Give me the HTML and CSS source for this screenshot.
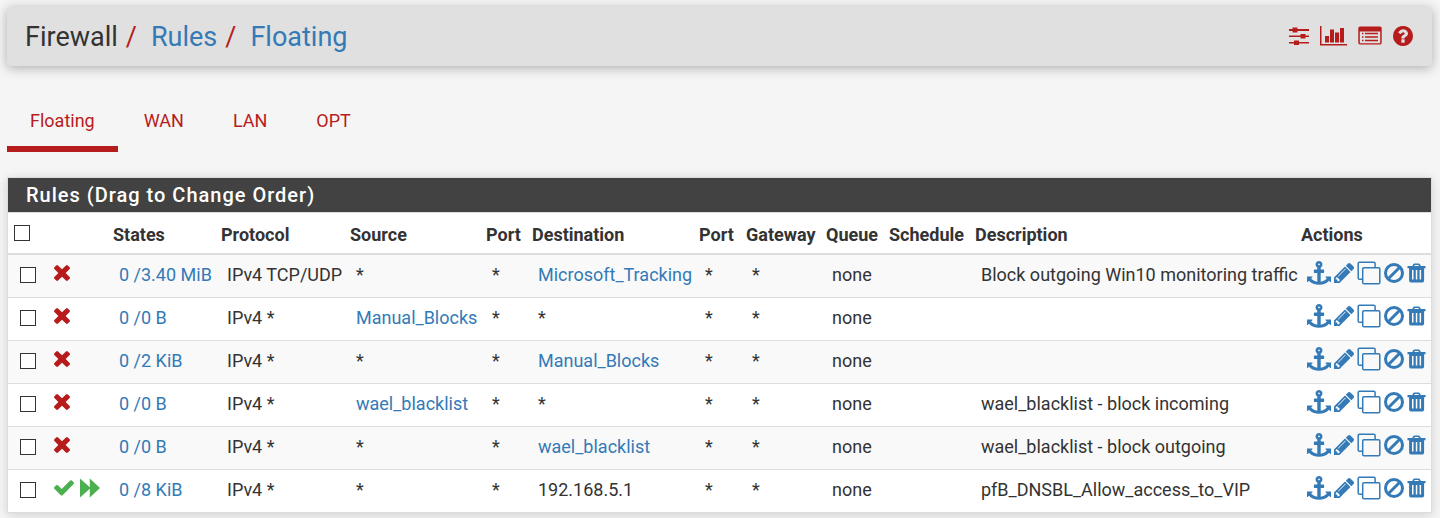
FILE: index.html
```
<!DOCTYPE html>
<html lang="en">
<head>
<meta charset="utf-8">
<title>Firewall / Rules / Floating</title>
<link rel="stylesheet" href="styles.css">
</head>
<body>
<svg class="sprite" aria-hidden="true">
  <symbol id="anchor" viewBox="0 0 1792 1792"><path d="M960 256q0-26-19-45t-45-19-45 19-19 45 19 45 45 19 45-19 19-45zm832 928v352q0 22-20 30-8 2-12 2-12 0-23-9l-93-93q-119 143-318.500 226.500t-429.500 83.500-429.500-83.500-318.500-226.500l-93 93q-9 9-23 9-4 0-12-2-20-8-20-30v-352q0-14 9-23t23-9h352q22 0 30 20 8 19-7 35l-100 100q67 91 189.500 153.500t271.500 82.500v-647h-192q-26 0-45-19t-19-45v-128q0-26 19-45t45-19h192v-163q-58-34-93-92.500t-35-128.500q0-106 75-181t181-75 181 75 75 181q0 70-35 128.500t-93 92.500v163h192q26 0 45 19t19 45v128q0 26-19 45t-45 19h-192v647q149-20 271.500-82.500t189.500-153.500l-100-100q-15-16-7-35 8-20 30-20h352q14 0 23 9t9 23z"/></symbol>
  <symbol id="pencil" viewBox="128 149 1515 1515"><path d="M491 1536l91-91-235-235-91 91v107h128v128h107zm523-928q0-22-22-22-10 0-17 7l-542 542q-7 7-7 17 0 22 22 22 10 0 17-7l542-542q7-7 7-17zm-54-192l416 416-832 832h-416v-416zm683 96q0 53-37 90l-166 166-416-416 166-165q36-38 90-38 53 0 91 38l235 234q37 39 37 91z"/></symbol>
  <symbol id="clone" viewBox="0 0 24 24"><path fill="none" stroke="currentColor" stroke-width="1.500" d="M7 6.700h14.500a1.300 1.300 0 0 1 1.300 1.300v13.500a1.300 1.300 0 0 1-1.300 1.300H7a1.300 1.300 0 0 1-1.300-1.300V8A1.300 1.300 0 0 1 7 6.700zM5.500 18.200H2.500a1.300 1.300 0 0 1-1.300-1.300V2.500a1.300 1.300 0 0 1 1.300-1.300h14.300a1.300 1.300 0 0 1 1.300 1.300v4"/></symbol>
  <symbol id="ban" viewBox="0 0 20 20"><g fill="none" stroke="currentColor" stroke-width="3"><circle cx="10" cy="10" r="8.500"/><path d="M4 16L16 4"/></g></symbol>
  <symbol id="trash" viewBox="0 0 19 20"><path fill-rule="evenodd" d="M.5 3h4.800L6.300 1Q6.600.5 7.500.5h4.200q.9 0 1.200.7L13.900 3H18.500V5.200h-1.400V17.500q0 2-1.700 2H3.800q-1.700 0-1.700-2V5.200H.5zM7.200 3h4.800l-.6-1H7.800zM5 7v9.500h1.500V7zm3.800 0v9.500h1.500V7zm3.800 0v9.500h1.500V7z"/></symbol>
  <symbol id="times" viewBox="302 366 1188 1188"><path d="M1490 1322q0 40-28 68l-136 136q-28 28-68 28t-68-28l-294-294-294 294q-28 28-68 28t-68-28l-136-136q-28-28-28-68t28-68l294-294-294-294q-28-28-28-68t28-68l136-136q28-28 68-28t68 28l294 294 294-294q28-28 68-28t68 28l136 136q28 28 28 68t-28 68l-294 294 294 294q28 28 28 68z"/></symbol>
  <symbol id="check" viewBox="121 344 1550 1188"><path d="M1671 566q0 40-28 68l-724 724-136 136q-28 28-68 28t-68-28l-136-136-362-362q-28-28-28-68t28-68l136-136q28-28 68-28t68 28l294 295 656-657q28-28 68-28t68 28l136 136q28 28 28 68z"/></symbol>
  <symbol id="forward" viewBox="0 0 21 20"><path d="M.5.500L10.300 9.200V.500L20.500 10 10.300 19.500V10.800L.5 19.500z"/></symbol>
  <symbol id="sliders" viewBox="0 0 20 20"><path d="M0 3h3.500V1.500h5V3H20v2H8.500v1.500h-5V5H0zM0 9.500h11.500V8h5v1.500H20v1.500h-3.500v1.500h-5V11H0zM0 16h5v-1.500h5V16h10v1.500H10V19H5v-1.500H0z"/></symbol>
  <symbol id="chart" viewBox="0 0 27 20"><path d="M0 0h1.500v18H27v1.500H0zM5 10h4v6.500H5zM10 3.500h4v13h-4zM15 6.500h4v10h-4zM20 2h4v14.500h-4z"/></symbol>
  <symbol id="list" viewBox="0 0 24 20"><path fill-rule="evenodd" d="M2 .5h20q1.700 0 1.700 1.700v14.600q0 1.700-1.700 1.700H2Q.3 18.500.3 16.800V2.200Q.3.500 2 .5zM1.800 5.500v11.200q0 .5.500.5h19.400q.5 0 .5-.5V5.500zM4 6.700h1.500v1.500H4zm3 0h13v1.500H7zM4 10.200h1.500v1.500H4zm3 0h13v1.500H7zM4 13.700h1.500v1.500H4zm3 0h13v1.500H7z"/></symbol>
  <symbol id="help" viewBox="128 128 1536 1536"><path d="M1024 1376v-192q0-14-9-23t-23-9h-192q-14 0-23 9t-9 23v192q0 14 9 23t23 9h192q14 0 23-9t9-23zm256-672q0-88-55.500-163t-138.500-116-170-41q-243 0-371 213-15 24 8 42l132 100q7 6 19 6 16 0 25-12 53-68 86-92 34-24 86-24 48 0 85.500 26t37.500 59q0 38-20 61t-68 45q-63 28-115.500 86.500t-52.500 125.500v36q0 14 9 23t23 9h192q14 0 23-9t9-23q0-19 21.500-49.500t54.500-49.500q32-18 49-28.500t46-35 44.500-48 28-60.500 12.500-81zm384 192q0 209-103 385.500t-279.500 279.500-385.500 103-385.500-103-279.500-279.500-103-385.500 103-385.500 279.500-279.500 385.500-103 385.500 103 279.500 279.500 103 385.500z"/></symbol>
</svg>

<header class="page-header">
  <h1 class="crumbs"><span>Firewall</span><span class="slash">/</span><a href="#rules">Rules</a><span class="slash">/</span><a href="#floating">Floating</a></h1>
  <nav class="tools" aria-label="Page tools">
    <a href="#advanced" aria-label="Advanced settings"><svg class="w20"><use href="#sliders"/></svg></a>
    <a href="#status" aria-label="Status"><svg class="w27"><use href="#chart"/></svg></a>
    <a href="#log" aria-label="Log"><svg class="w24"><use href="#list"/></svg></a>
    <a href="#help-page" aria-label="Help"><svg class="w20"><use href="#help"/></svg></a>
  </nav>
</header>

<nav class="tabs" aria-label="Interfaces">
  <a class="tab active" href="#floating">Floating</a>
  <a class="tab" href="#wan">WAN</a>
  <a class="tab" href="#lan">LAN</a>
  <a class="tab" href="#opt">OPT</a>
</nav>

<section class="panel">
  <h2 class="panel-title">Rules (Drag to Change Order)</h2>
  <table class="rules">
    <colgroup><col class="c-check"><col class="c-icon"><col class="c-states"><col class="c-proto"><col class="c-source"><col class="c-port"><col class="c-dest"><col class="c-port2"><col class="c-gateway"><col class="c-queue"><col class="c-schedule"><col><col class="c-actions"></colgroup>
    <thead>
      <tr><th><input type="checkbox" aria-label="Select all"></th><th></th><th>States</th><th>Protocol</th><th>Source</th><th>Port</th><th>Destination</th><th>Port</th><th>Gateway</th><th>Queue</th><th>Schedule</th><th>Description</th><th>Actions</th></tr>
    </thead>
    <tbody>
      <tr><td><input type="checkbox" aria-label="Select rule 1"></td><td><div class="icons block"><svg class="times"><use href="#times"/></svg></div></td><td><a href="#s1">0 /3.40 MiB</a></td><td>IPv4 TCP/UDP</td><td>*</td><td>*</td><td><a href="#a1">Microsoft_Tracking</a></td><td>*</td><td>*</td><td>none</td><td></td><td>Block outgoing Win10 monitoring traffic</td><td><div class="icons"><a href="#m" aria-label="Move"><svg class="w24 h24"><use href="#anchor"/></svg></a><a href="#e" aria-label="Edit"><svg class="w20"><use href="#pencil"/></svg></a><a href="#c" aria-label="Copy"><svg class="w24 h24"><use href="#clone"/></svg></a><a href="#d" aria-label="Disable"><svg class="w20"><use href="#ban"/></svg></a><a href="#x" aria-label="Delete"><svg class="w19"><use href="#trash"/></svg></a></div></td></tr>
      <tr><td><input type="checkbox" aria-label="Select rule 2"></td><td><div class="icons block"><svg class="times"><use href="#times"/></svg></div></td><td><a href="#s2">0 /0 B</a></td><td>IPv4 *</td><td><a href="#a2">Manual_Blocks</a></td><td>*</td><td>*</td><td>*</td><td>*</td><td>none</td><td></td><td></td><td><div class="icons"><a href="#m" aria-label="Move"><svg class="w24 h24"><use href="#anchor"/></svg></a><a href="#e" aria-label="Edit"><svg class="w20"><use href="#pencil"/></svg></a><a href="#c" aria-label="Copy"><svg class="w24 h24"><use href="#clone"/></svg></a><a href="#d" aria-label="Disable"><svg class="w20"><use href="#ban"/></svg></a><a href="#x" aria-label="Delete"><svg class="w19"><use href="#trash"/></svg></a></div></td></tr>
      <tr><td><input type="checkbox" aria-label="Select rule 3"></td><td><div class="icons block"><svg class="times"><use href="#times"/></svg></div></td><td><a href="#s3">0 /2 KiB</a></td><td>IPv4 *</td><td>*</td><td>*</td><td><a href="#a3">Manual_Blocks</a></td><td>*</td><td>*</td><td>none</td><td></td><td></td><td><div class="icons"><a href="#m" aria-label="Move"><svg class="w24 h24"><use href="#anchor"/></svg></a><a href="#e" aria-label="Edit"><svg class="w20"><use href="#pencil"/></svg></a><a href="#c" aria-label="Copy"><svg class="w24 h24"><use href="#clone"/></svg></a><a href="#d" aria-label="Disable"><svg class="w20"><use href="#ban"/></svg></a><a href="#x" aria-label="Delete"><svg class="w19"><use href="#trash"/></svg></a></div></td></tr>
      <tr><td><input type="checkbox" aria-label="Select rule 4"></td><td><div class="icons block"><svg class="times"><use href="#times"/></svg></div></td><td><a href="#s4">0 /0 B</a></td><td>IPv4 *</td><td><a href="#a4">wael_blacklist</a></td><td>*</td><td>*</td><td>*</td><td>*</td><td>none</td><td></td><td>wael_blacklist - block incoming</td><td><div class="icons"><a href="#m" aria-label="Move"><svg class="w24 h24"><use href="#anchor"/></svg></a><a href="#e" aria-label="Edit"><svg class="w20"><use href="#pencil"/></svg></a><a href="#c" aria-label="Copy"><svg class="w24 h24"><use href="#clone"/></svg></a><a href="#d" aria-label="Disable"><svg class="w20"><use href="#ban"/></svg></a><a href="#x" aria-label="Delete"><svg class="w19"><use href="#trash"/></svg></a></div></td></tr>
      <tr><td><input type="checkbox" aria-label="Select rule 5"></td><td><div class="icons block"><svg class="times"><use href="#times"/></svg></div></td><td><a href="#s5">0 /0 B</a></td><td>IPv4 *</td><td>*</td><td>*</td><td><a href="#a5">wael_blacklist</a></td><td>*</td><td>*</td><td>none</td><td></td><td>wael_blacklist - block outgoing</td><td><div class="icons"><a href="#m" aria-label="Move"><svg class="w24 h24"><use href="#anchor"/></svg></a><a href="#e" aria-label="Edit"><svg class="w20"><use href="#pencil"/></svg></a><a href="#c" aria-label="Copy"><svg class="w24 h24"><use href="#clone"/></svg></a><a href="#d" aria-label="Disable"><svg class="w20"><use href="#ban"/></svg></a><a href="#x" aria-label="Delete"><svg class="w19"><use href="#trash"/></svg></a></div></td></tr>
      <tr><td><input type="checkbox" aria-label="Select rule 6"></td><td><div class="icons pass"><svg class="w20"><use href="#check"/></svg><svg class="w22"><use href="#forward"/></svg></div></td><td><a href="#s6">0 /8 KiB</a></td><td>IPv4 *</td><td>*</td><td>*</td><td>192.168.5.1</td><td>*</td><td>*</td><td>none</td><td></td><td>pfB_DNSBL_Allow_access_to_VIP</td><td><div class="icons"><a href="#m" aria-label="Move"><svg class="w24 h24"><use href="#anchor"/></svg></a><a href="#e" aria-label="Edit"><svg class="w20"><use href="#pencil"/></svg></a><a href="#c" aria-label="Copy"><svg class="w24 h24"><use href="#clone"/></svg></a><a href="#d" aria-label="Disable"><svg class="w20"><use href="#ban"/></svg></a><a href="#x" aria-label="Delete"><svg class="w19"><use href="#trash"/></svg></a></div></td></tr>
    </tbody>
  </table>
</section>
</body>
</html>
```
FILE: styles.css
```
* { box-sizing: border-box; }
body {
  margin: 0;
  padding: 7px 8px 5px 7px;
  background: #f5f5f5;
  color: #333;
  font: 18px/26px Roboto, "Liberation Sans", sans-serif;
}
a { color: #337ab7; text-decoration: none; }
svg { display: block; height: 20px; fill: currentColor; }
.sprite { display: none; }
.w19 { width: 19px; }
.w20 { width: 20px; }
.w22 { width: 22px; }
.w24 { width: 24px; }
.w27 { width: 27px; }
.h24 { height: 24px; }
.times { width: 16px; height: 16px; }

.page-header {
  display: flex;
  justify-content: space-between;
  align-items: center;
  min-height: 59px;
  padding: 0 19px 0 18px;
  background: #e0e0e0;
  border-radius: 4px;
  box-shadow: 0 2px 12px rgba(0, 0, 0, .3);
}
.crumbs { margin: 0; font-size: 27px; line-height: 32px; font-weight: 400; }
.slash { margin: 0 14px 0 8px; color: #b71c1c; }
.tools { display: flex; align-items: center; gap: 11px; padding-bottom: 2px; }
.tools a { color: #b71c1c; }

.tabs { display: flex; gap: 3px; margin-top: 31px; }
.tab {
  padding: 11px 23px 12px;
  border-bottom: 6px solid transparent;
  color: #b71c1c;
}
.tab.active { border-color: #b71c1c; }

.panel {
  margin-top: 25px;
  background: #fff;
  border: 1px solid #ddd;
  box-shadow: 0 2px 10px rgba(0, 0, 0, .15);
}
.panel-title {
  margin: 0;
  padding: 4px 18px;
  border-bottom: 1px solid #ddd;
  background: #424242;
  color: #fff;
  font-size: 20px;
  line-height: 26px;
  font-weight: 500;
  letter-spacing: 1px;
}
.rules { width: 100%; table-layout: fixed; border-collapse: separate; border-spacing: 0; }
.rules th { padding: 9px 0 5px 6px; border-bottom: 2px solid #ddd; text-align: left; font-weight: 700; white-space: nowrap; }
.rules td { height: 43px; padding: 7px 0 9px 12px; border-bottom: 1px solid #ddd; white-space: nowrap; }
.rules tbody tr:last-child td { height: 42px; border-bottom: 0; }
.rules tbody tr:nth-child(odd) { background: #f9f9f9; }
.rules input {
  appearance: none;
  display: block;
  width: 16px;
  height: 16px;
  margin: 0;
  border: 1px solid #333;
  background: #fff;
}
.rules th input { margin-bottom: 4px; }
.icons { display: flex; align-items: center; gap: 3px; height: 22px; margin-bottom: 4px; }
.block { color: #b71c1c; }
.pass { color: #4caf50; gap: 5px; }

.c-check { width: 34px; }
.c-icon { width: 65px; }
.c-states { width: 108px; }
.c-proto { width: 129px; }
.c-source { width: 136px; }
.c-port { width: 46px; }
.c-dest { width: 167px; }
.c-port2 { width: 47px; }
.c-gateway { width: 80px; }
.c-queue { width: 63px; }
.c-schedule { width: 86px; }
.c-actions { width: 136px; }
```
